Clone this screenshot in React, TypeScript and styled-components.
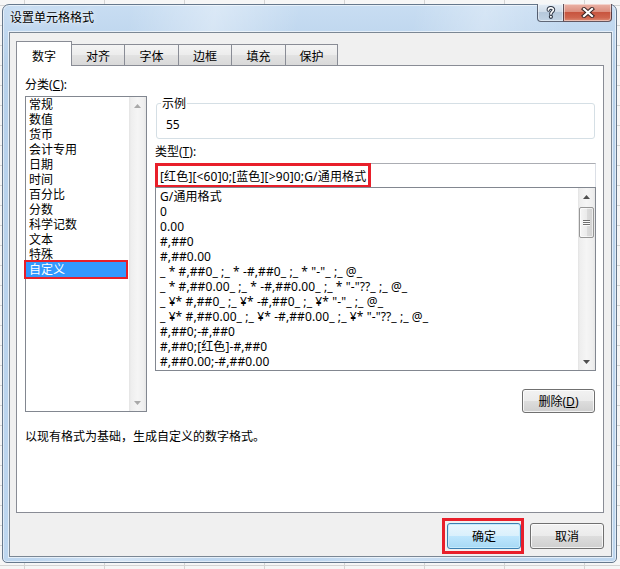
import React from 'react'
import styled, { createGlobalStyle, css } from 'styled-components'

const GlobalStyle = createGlobalStyle`
  html, body {
    margin: 0;
    padding: 0;
  }
  body {
    font-family: "Noto Sans", "Noto Sans CJK SC", sans-serif;
    font-size: 12px;
    color: #000;
  }
`

const RED = '#e81f2a'

const Desktop = styled.div`
  width: 620px;
  height: 569px;
  box-sizing: border-box;
  padding: 4px 3px 0 2px;
  overflow: hidden;
  background-color: #f6f6f6;
  background-image:
    linear-gradient(to right, #d4d4d4 1px, transparent 1px),
    linear-gradient(to bottom, #d4d4d4 1px, transparent 1px);
  background-size: 80px 20px;
  background-position: 24px 0, 0 5px;
`

const Window = styled.div`
  width: 615px;
  height: 559px;
  box-sizing: border-box;
  border: 1px solid #66788c;
  border-radius: 7px 7px 5px 5px;
  background:
    linear-gradient(100deg, rgba(255,255,255,0) 18%, rgba(255,255,255,0.35) 30%, rgba(255,255,255,0) 42%, rgba(255,255,255,0) 58%, rgba(255,255,255,0.28) 68%, rgba(255,255,255,0) 80%),
    linear-gradient(to bottom, #c8ddf2 0, #b7d1eb 60px, #bdd6ef 100%);
  box-shadow: inset 0 0 0 1px rgba(255,255,255,0.55);
  display: flex;
  flex-direction: column;
`

const TitleBar = styled.div`
  height: 27px;
  flex: none;
  display: flex;
  justify-content: space-between;
  align-items: flex-start;
  padding: 0 4px 0 7px;
`

const Title = styled.div`
  margin-top: 5px;
  line-height: 15px;
  text-shadow: 0 0 6px rgba(255,255,255,0.9), 0 0 2px rgba(255,255,255,0.9);
`

const CaptionButtons = styled.div`
  display: flex;
  margin-top: -1px;
`

const CaptionButton = styled.div<{ $kind: 'help' | 'close' }>`
  box-sizing: border-box;
  height: 18px;
  display: flex;
  align-items: center;
  justify-content: center;
  border: 1px solid rgba(40, 48, 66, 0.7);
  border-top: none;
  box-shadow: inset 0 0 0 1px rgba(255,255,255,0.45);
  ${p => p.$kind === 'help'
    ? css`
      width: 27px;
      margin-right: -1px;
      border-radius: 0 0 0 4px;
      background: linear-gradient(to bottom, #e4ecf4 0%, #d0dce9 45%, #b6c8db 50%, #c2d3e4 100%);
    `
    : css`
      width: 49px;
      border-radius: 0 0 4px 0;
      background: linear-gradient(to bottom, #ebb3a7 0%, #dc8f7f 45%, #c8553f 50%, #cf654e 80%, #de8c75 100%);
    `}
`

const Client = styled.div`
  flex: 1;
  margin: 0 4px 5px 6px;
  display: flex;
  flex-direction: column;
  background: #f0f0f0;
  border: 1px solid #7b8794;
  box-shadow: 0 0 0 1px rgba(255,255,255,0.6);
  padding: 8px 7px 7px 6px;
`

const TabStrip = styled.div`
  height: 25px;
  flex: none;
  display: flex;
  align-items: flex-end;
  margin-bottom: -1px;
  position: relative;
  z-index: 1;
`

const Tab = styled.div<{ $w: number; $active?: boolean }>`
  box-sizing: border-box;
  width: ${p => p.$w}px;
  display: flex;
  justify-content: center;
  line-height: 15px;
  border: 1px solid #898c95;
  border-bottom: none;
  & + & {
    margin-left: -1px;
  }
  ${p => p.$active
    ? css`
      height: 25px;
      padding-top: 7px;
      background: #fff;
      position: relative;
      z-index: 2;
    `
    : css`
      height: 21px;
      padding-top: 4px;
      margin-bottom: 1px;
      background: linear-gradient(to bottom, #f4f4f4 0%, #ececec 50%, #e2e2e2 51%, #d9d9d9 100%);
    `}
`

const Panel = styled.div`
  height: 448px;
  flex: none;
  box-sizing: border-box;
  border: 1px solid #898c95;
  background: #fff;
  padding: 11px 7px 0 8px;
  display: flex;
  flex-direction: column;
`

const Columns = styled.div`
  display: grid;
  grid-template-columns: 122px 441px;
  column-gap: 8px;
  align-items: start;
`

const LeftCol = styled.div`
  display: flex;
  flex-direction: column;
`

const RightCol = styled.div`
  display: flex;
  flex-direction: column;
  padding-top: 19px;
`

const Label = styled.div<{ $gap?: number }>`
  line-height: 15px;
  margin-top: ${p => p.$gap ?? 0}px;
  margin-bottom: 4px;
`

const ListFrame = styled.div<{ $h: number }>`
  box-sizing: border-box;
  height: ${p => p.$h}px;
  display: flex;
  border: 1px solid #828790;
  background: #fff;
`

const Rows = styled.div<{ $pad: number; $clip?: boolean }>`
  flex: 1;
  min-width: 0;
  line-height: 15px;
  padding-top: ${p => p.$pad}px;
  overflow: ${p => (p.$clip ? 'hidden' : 'visible')};
`

const CategoryRow = styled.div<{ $selected?: boolean }>`
  height: 15px;
  padding-left: 3px;
  white-space: nowrap;
  ${p => p.$selected && css`
    margin-right: 3px;
    background: #3399ff;
    color: #fff;
    box-shadow: 0 0 0 2px ${RED};
  `}
`

const FormatRow = styled.div`
  height: 15px;
  padding-left: 4px;
  white-space: pre;
  letter-spacing: 0.1px;
`

const ScrollBar = styled.div`
  width: 17px;
  flex: none;
  display: flex;
  flex-direction: column;
  background: linear-gradient(to right, #e3e3e3 0, #eeeeee 2px, #f5f5f5 50%, #efefef 85%, #e7e7e7 100%);
`

const ScrollArrow = styled.div`
  height: 17px;
  flex: none;
  display: flex;
  align-items: center;
  justify-content: center;
`

const ScrollTrack = styled.div`
  flex: 1;
  padding-top: 2px;
`

const Thumb = styled.div`
  box-sizing: border-box;
  height: 31px;
  margin: 0 1px;
  border: 1px solid #979797;
  border-radius: 2px;
  background: linear-gradient(to right, #f5f5f5 0%, #ebebeb 50%, #dcdcdc 51%, #d2d2d2 100%);
  box-shadow: inset 0 0 0 1px rgba(255,255,255,0.6);
  display: flex;
  flex-direction: column;
  align-items: center;
  justify-content: center;
  gap: 1px;
`

const GripLine = styled.div`
  width: 7px;
  height: 1px;
  background: #6e6e6e;
  box-shadow: 0 1px 0 #fbfbfb;
`

const Sample = styled.fieldset`
  margin: 0 1px;
  padding: 0 0 6px 4px;
  border: 1px solid #d5dfe5;
  border-radius: 3px;
  min-width: 0;

  legend {
    padding: 0 1px;
    line-height: 15px;
  }
`

const SampleValue = styled.div`
  margin-top: 6px;
  padding-left: 5px;
  line-height: 15px;
`

const TypeInput = styled.div`
  box-sizing: border-box;
  height: 25px;
  display: flex;
  border: 1px solid #dbdfe6;
  border-top-color: #abadb3;
  background: #fff;
`

const Highlight = styled.div`
  margin: -1px 0 -1px -1px;
  padding: 0 2px;
  border: 3px solid ${RED};
  display: flex;
  align-items: center;
  white-space: nowrap;
  letter-spacing: 0.15px;
`

const FormatFrame = styled(ListFrame)`
  margin-top: -1px;
`

const ButtonRow = styled.div`
  display: flex;
  justify-content: flex-end;
  margin-top: 18px;
  padding-right: 1px;
`

const DialogButton = styled.button<{ $w: number; $h: number; $default?: boolean }>`
  box-sizing: border-box;
  width: ${p => p.$w}px;
  height: ${p => p.$h}px;
  margin: 0;
  padding: 0;
  display: flex;
  align-items: center;
  justify-content: center;
  font: inherit;
  line-height: 15px;
  color: #000;
  border: 1px solid #707070;
  border-radius: 3px;
  background: linear-gradient(to bottom, #f2f2f2 0%, #ebebeb 50%, #dddddd 51%, #cfcfcf 100%);
  box-shadow: inset 0 0 0 1px rgba(255,255,255,0.75);
  ${p => p.$default && css`
    border-color: #3c7fb1;
    background: linear-gradient(to bottom, #eaf6fd 0%, #d9f0fc 50%, #bee6fd 51%, #a7d9f5 100%);
    box-shadow: inset 0 0 0 1px #c6ebfc;
  `}
`

const OkFrame = styled.div`
  margin: -5px -3px -5px -5px;
  padding: 2px 0 2px 2px;
  border: 3px solid ${RED};
  display: flex;
`

const Description = styled.div`
  margin-top: 16px;
  line-height: 15px;
`

const Footer = styled.div`
  margin-top: 10px;
  display: flex;
  justify-content: flex-end;
  gap: 9px;
`

const Arrow = ({ up, color }: { up?: boolean; color: string }) => (
  <svg width="7" height="4" viewBox="0 0 7 4">
    <polygon points={up ? '0,4 3.5,0 7,4' : '0,0 7,0 3.5,4'} fill={color} />
  </svg>
)

const HelpGlyph = () => (
  <svg width="10" height="13" viewBox="0 0 10 13">
    <g fill="none" strokeLinecap="round">
      <path d="M2.4 4 C2.4 1.2 7.4 1.2 7.4 3.8 C7.4 5.8 4.9 5.6 4.9 8" stroke="#2b3444" strokeWidth="3.6" />
      <circle cx="4.9" cy="10.8" r="1.3" fill="#2b3444" stroke="#2b3444" strokeWidth="1.6" />
      <path d="M2.4 4 C2.4 1.2 7.4 1.2 7.4 3.8 C7.4 5.8 4.9 5.6 4.9 8" stroke="#fff" strokeWidth="1.7" />
      <circle cx="4.9" cy="10.8" r="1" fill="#fff" />
    </g>
  </svg>
)

const CloseGlyph = () => (
  <svg width="14" height="11" viewBox="0 0 14 11">
    <g strokeLinecap="square">
      <path d="M3 2 L11 9 M11 2 L3 9" stroke="#3a2626" strokeWidth="4.2" />
      <path d="M3 2 L11 9 M11 2 L3 9" stroke="#fff" strokeWidth="2.2" />
    </g>
  </svg>
)

const tabs = [
  { label: '数字', w: 56 },
  { label: '对齐', w: 54 },
  { label: '字体', w: 55 },
  { label: '边框', w: 54 },
  { label: '填充', w: 55 },
  { label: '保护', w: 53 },
]

const categories = ['常规', '数值', '货币', '会计专用', '日期', '时间', '百分比', '分数', '科学记数', '文本', '特殊', '自定义']

const formats = [
  'G/通用格式',
  '0',
  '0.00',
  '#,##0',
  '#,##0.00',
  '_ * #,##0_ ;_ * -#,##0_ ;_ * "-"_ ;_ @_ ',
  '_ * #,##0.00_ ;_ * -#,##0.00_ ;_ * "-"??_ ;_ @_ ',
  '_ ¥* #,##0_ ;_ ¥* -#,##0_ ;_ ¥* "-"_ ;_ @_ ',
  '_ ¥* #,##0.00_ ;_ ¥* -#,##0.00_ ;_ ¥* "-"??_ ;_ @_ ',
  '#,##0;-#,##0',
  '#,##0;[红色]-#,##0',
  '#,##0.00;-#,##0.00',
]

const App: React.FC = () => {
  return (
    <Desktop>
      <GlobalStyle />
      <Window>
        <TitleBar>
          <Title>设置单元格格式</Title>
          <CaptionButtons>
            <CaptionButton $kind="help"><HelpGlyph /></CaptionButton>
            <CaptionButton $kind="close"><CloseGlyph /></CaptionButton>
          </CaptionButtons>
        </TitleBar>
        <Client>
          <TabStrip>
            {tabs.map((t, i) => (
              <Tab key={t.label} $w={t.w} $active={i === 0}>{t.label}</Tab>
            ))}
          </TabStrip>
          <Panel>
            <Columns>
              <LeftCol>
                <Label>分类(<u>C</u>):</Label>
                <ListFrame $h={316}>
                  <Rows $pad={0}>
                    {categories.map(c => (
                      <CategoryRow key={c} $selected={c === '自定义'}>{c}</CategoryRow>
                    ))}
                  </Rows>
                  <ScrollBar>
                    <ScrollArrow><Arrow up color="#a9a9a9" /></ScrollArrow>
                    <ScrollTrack />
                    <ScrollArrow><Arrow color="#a9a9a9" /></ScrollArrow>
                  </ScrollBar>
                </ListFrame>
              </LeftCol>
              <RightCol>
                <Sample>
                  <legend>示例</legend>
                  <SampleValue>55</SampleValue>
                </Sample>
                <Label $gap={5}>类型(<u>T</u>):</Label>
                <TypeInput>
                  <Highlight>[红色][&lt;60]0;[蓝色][&gt;90]0;G/通用格式</Highlight>
                </TypeInput>
                <FormatFrame $h={184}>
                  <Rows $pad={1} $clip>
                    {formats.map(f => (
                      <FormatRow key={f}>{f}</FormatRow>
                    ))}
                  </Rows>
                  <ScrollBar>
                    <ScrollArrow><Arrow up color="#4f4f4f" /></ScrollArrow>
                    <ScrollTrack>
                      <Thumb>
                        <GripLine />
                        <GripLine />
                        <GripLine />
                      </Thumb>
                    </ScrollTrack>
                    <ScrollArrow><Arrow color="#4f4f4f" /></ScrollArrow>
                  </ScrollBar>
                </FormatFrame>
                <ButtonRow>
                  <DialogButton $w={73} $h={24}>删除(<u>D</u>)</DialogButton>
                </ButtonRow>
              </RightCol>
            </Columns>
            <Description>以现有格式为基础，生成自定义的数字格式。</Description>
          </Panel>
          <Footer>
            <OkFrame>
              <DialogButton $w={74} $h={26} $default>确定</DialogButton>
            </OkFrame>
            <DialogButton $w={74} $h={26}>取消</DialogButton>
          </Footer>
        </Client>
      </Window>
    </Desktop>
  )
}

export default App
